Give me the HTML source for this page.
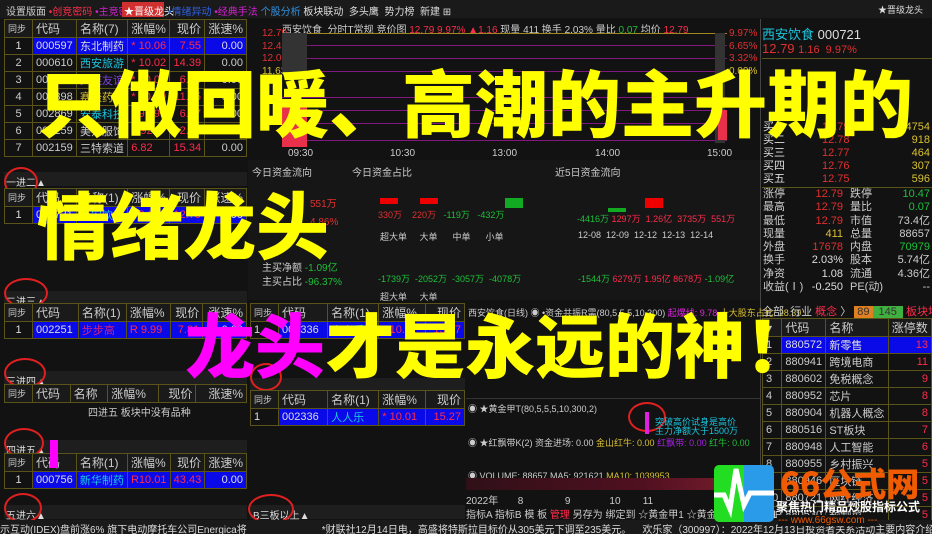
<!DOCTYPE html>
<html><head><meta charset="utf-8"><style>
*{margin:0;padding:0;box-sizing:border-box}
body{width:932px;height:534px;background:#121212;position:relative;overflow:hidden;font-family:"Liberation Sans","Noto Sans CJK SC",sans-serif;font-size:11px;color:#ccc}
.a{position:absolute;white-space:nowrap}
.bar{position:absolute;background:#1e1e1e}
.tbl{position:absolute;border-collapse:collapse;font-size:11px}
.tbl td{border:1px solid #5a5418;height:16px;padding:0 3px;white-space:nowrap}
.hd td{background:#1a1a1a;color:#ccc;font-size:12px}
.sel td{background:#0a0ae8}
.r{color:#ff2b4b}.g{color:#1fbf3a}.c{color:#19c6e0}.y{color:#d8c030}.w{color:#ddd}
.big{position:absolute;font-family:"Noto Sans CJK SC","WenQuanYi Zen Hei",sans-serif;font-weight:900;color:#ffff00;white-space:nowrap;line-height:1}
.circ{position:absolute;border:2px solid #e02020;border-radius:50%}
.sec{position:absolute;left:2px;font-size:10px;color:#ddd}
</style></head><body>
<div class="bar" style="left:0;top:0;width:932px;height:18px;background:#1a1a1a"></div>
<div class="a" style="left:6px;top:3px;font-size:10px;color:#ccc">设置版面 <span class="r">•创竞密码</span> <span style="color:#d020d0">•主竞密码</span></div>
<div class="a" style="left:122px;top:2px;width:42px;height:15px;background:#d03030;color:#fff;font-size:10px;padding:1px 2px">★晋级龙头</div>
<div class="a" style="left:168px;top:3px;font-size:10px;color:#3060e0">•情绪异动 <span style="color:#d020d0">•经典手法</span> <span style="color:#3090e0">个股分析</span> <span class="w">板块联动 &nbsp;多头鹰 &nbsp;势力榜 &nbsp;新建 ⊞</span></div>
<div class="a" style="left:878px;top:3px;font-size:9px;color:#ddd">★晋级龙头</div>
<table class="tbl" style="left:4px;top:19px;width:243px">
<tr class="hd"><td style="width:28px;font-size:9px">同步</td><td>代码</td><td>名称(7)</td><td>涨幅%</td><td style="text-align:right">现价</td><td style="text-align:right">涨速%</td></tr>
<tr class="sel"><td class="w" style="background:#121212;text-align:center">1</td><td class="w">000597</td><td class="w">东北制药</td><td class="r">* 10.06</td><td class="r" style="text-align:right">7.55</td><td class="w" style="text-align:right">0.00</td></tr>
<tr><td style="text-align:center">2</td><td>000610</td><td class="c">西安旅游</td><td class="r">* 10.02</td><td class="r" style="text-align:right">14.39</td><td style="text-align:right">0.00</td></tr>
<tr><td style="text-align:center">3</td><td>000679</td><td style="color:#8040e0">大连友谊</td><td class="r">* 10.00</td><td class="r" style="text-align:right">6.93</td><td style="text-align:right">0.00</td></tr>
<tr><td style="text-align:center">4</td><td>002398</td><td class="y">赛隆药业</td><td class="r">* 10.00</td><td class="r" style="text-align:right">11.75</td><td style="text-align:right">0.00</td></tr>
<tr><td style="text-align:center">5</td><td>002869</td><td class="c">安泰科技</td><td class="r">* 9.99</td><td class="r" style="text-align:right">6.57</td><td style="text-align:right">0.00</td></tr>
<tr><td style="text-align:center">6</td><td>002259</td><td>美邦服饰</td><td class="r">9.92</td><td class="r" style="text-align:right">2.46</td><td style="text-align:right">0.00</td></tr>
<tr><td style="text-align:center">7</td><td>002159</td><td>三特索道</td><td class="r">6.82</td><td class="r" style="text-align:right">15.34</td><td style="text-align:right">0.00</td></tr>
</table>
<div class="bar" style="left:4px;top:172px;width:243px;height:14px"></div><div class="sec" style="top:174px;left:6px">一进二▲</div>
<div class="circ" style="left:4px;top:167px;width:34px;height:30px"></div>
<table class="tbl" style="left:4px;top:188px;width:243px">
<tr class="hd"><td style="width:28px;font-size:9px">同步</td><td>代码</td><td>名称(1)</td><td>涨幅%</td><td style="text-align:right">现价</td><td style="text-align:right">涨速%</td></tr>
<tr class="sel"><td class="w" style="background:#121212;text-align:center">1</td><td class="w">000721</td><td class="c">西安饮食</td><td class="r">* 9.97</td><td class="r" style="text-align:right">12.79</td><td class="w" style="text-align:right">0.00</td></tr>
</table>
<div class="bar" style="left:4px;top:291px;width:243px;height:14px"></div><div class="sec" style="top:293px;left:6px">二进三▲</div>
<div class="circ" style="left:4px;top:278px;width:44px;height:30px"></div>
<table class="tbl" style="left:4px;top:303px;width:243px">
<tr class="hd"><td style="width:28px;font-size:9px">同步</td><td>代码</td><td>名称(1)</td><td>涨幅%</td><td style="text-align:right">现价</td><td style="text-align:right">涨速%</td></tr>
<tr class="sel"><td class="w" style="background:#121212;text-align:center">1</td><td class="w">002251</td><td style="color:#d02080">步步高</td><td class="r">R 9.99</td><td class="r" style="text-align:right">7.81</td><td class="w" style="text-align:right">0.00</td></tr>
</table>
<div class="bar" style="left:4px;top:371px;width:243px;height:14px"></div><div class="sec" style="top:373px;left:6px">三进四▲</div>
<div class="circ" style="left:4px;top:358px;width:42px;height:30px"></div>
<table class="tbl" style="left:4px;top:384px;width:243px">
<tr class="hd"><td style="width:28px;font-size:9px">同步</td><td>代码</td><td>名称</td><td>涨幅%</td><td style="text-align:right">现价</td><td style="text-align:right">涨速%</td></tr>
</table>
<div class="a" style="left:88px;top:404px;font-size:10px">四进五 板块中没有品种</div>
<div class="bar" style="left:4px;top:440px;width:243px;height:14px"></div><div class="sec" style="top:442px;left:6px">四进五▲</div>
<div class="circ" style="left:4px;top:428px;width:40px;height:30px"></div>
<table class="tbl" style="left:4px;top:453px;width:243px">
<tr class="hd"><td style="width:28px;font-size:9px">同步</td><td>代码</td><td>名称(1)</td><td>涨幅%</td><td style="text-align:right">现价</td><td style="text-align:right">涨速%</td></tr>
<tr class="sel"><td class="w" style="background:#121212;text-align:center">1</td><td class="w">000756</td><td class="c">新华制药</td><td class="r">R10.01</td><td class="r" style="text-align:right">43.43</td><td class="w" style="text-align:right">0.00</td></tr>
</table>
<div class="a" style="left:50px;top:440px;width:8px;height:28px;background:#ff00ff"></div>
<div class="bar" style="left:4px;top:505px;width:243px;height:14px"></div><div class="sec" style="top:507px;left:6px">五进六▲</div>
<div class="circ" style="left:4px;top:493px;width:38px;height:30px"></div>
<div class="a" style="left:282px;top:21px;font-size:10px">西安饮食 &nbsp;分时T常规 竞价图 <span class="r">12.79 9.97% ▲1.16</span> 现量 411 换手 2.03% 量比 <span class="g">0.07</span> 均价 <span class="r">12.79</span></div>
<div class="a" style="left:282px;top:33px;width:445px;height:1px;background:#a08820"></div>
<div class="a" style="left:282px;top:45px;width:445px;height:1px;background:#801880"></div>
<div class="a" style="left:282px;top:58px;width:445px;height:1px;background:#801880"></div>
<div class="a" style="left:282px;top:71px;width:445px;height:1px;background:#801880"></div>
<div class="a" style="left:282px;top:97px;width:445px;height:1px;background:#801880"></div>
<div class="a" style="left:282px;top:110px;width:445px;height:1px;background:#801880"></div>
<div class="a" style="left:282px;top:123px;width:445px;height:1px;background:#801880"></div>
<div class="a" style="left:282px;top:140px;width:445px;height:1px;background:#801880"></div>
<div class="a" style="left:262px;top:28px;font-size:10px;color:#e03030;line-height:12.5px">12.79<br>12.40<br>12.02<br><span class="y">11.63</span></div>
<div class="a" style="left:282px;top:33px;width:25px;height:40px;background:#333"></div>
<div class="a" style="left:282px;top:100px;width:25px;height:47px;background:#e8304a"></div>
<div class="a" style="left:715px;top:33px;width:10px;height:110px;background:#333"></div>
<div class="a" style="left:718px;top:110px;width:9px;height:30px;background:#e8304a"></div>
<div class="a" style="left:729px;top:28px;font-size:10px;color:#e03030;line-height:12.5px">9.97%<br>6.65%<br>3.32%<br><span class="y">0.00%</span></div>
<div class="a" style="left:760px;top:19px;width:1px;height:500px;background:#444"></div>
<div class="a" style="left:288px;top:148px;font-size:10px">09:30</div><div class="a" style="left:390px;top:148px;font-size:10px">10:30</div>
<div class="a" style="left:492px;top:148px;font-size:10px">13:00</div><div class="a" style="left:595px;top:148px;font-size:10px">14:00</div><div class="a" style="left:707px;top:148px;font-size:10px">15:00</div>
<div class="a" style="left:248px;top:160px;width:512px;height:140px;background:#161616"></div>
<div class="a" style="left:252px;top:164px;font-size:10px">今日资金流向</div>
<div class="a" style="left:352px;top:164px;font-size:10px">今日资金占比</div>
<div class="a" style="left:555px;top:164px;font-size:10px">近5日资金流向</div>
<div class="a" style="left:310px;top:196px;font-size:10px;color:#e03030;line-height:18px">551万<br>4.86%</div>
<div class="a" style="left:262px;top:262px;font-size:10px;line-height:14px">主买净额 <span class="g">-1.09亿</span><br>主买占比 <span class="g">-96.37%</span></div>
<div class="a" style="left:380px;top:198px;width:18px;height:6px;background:#e00"></div>
<div class="a" style="left:420px;top:198px;width:18px;height:6px;background:#e00"></div>
<div class="a" style="left:505px;top:198px;width:18px;height:10px;background:#1a2"></div>
<div class="a" style="left:645px;top:198px;width:18px;height:10px;background:#e00"></div>
<div class="a" style="left:608px;top:208px;width:18px;height:4px;background:#1a2"></div>
<div class="a" style="left:378px;top:208px;font-size:9px;color:#e03030">330万 &nbsp;&nbsp;&nbsp;220万 &nbsp;&nbsp;<span class="g">-119万 &nbsp;&nbsp;-432万</span></div>
<div class="a" style="left:577px;top:212px;font-size:9px"><span class="g">-4416万</span> <span class="r">1297万 &nbsp;1.26亿 &nbsp;3735万 &nbsp;551万</span></div>
<div class="a" style="left:380px;top:230px;font-size:9px">超大单 &nbsp;&nbsp;&nbsp;&nbsp;大单 &nbsp;&nbsp;&nbsp;&nbsp;&nbsp;中单 &nbsp;&nbsp;&nbsp;&nbsp;&nbsp;小单</div>
<div class="a" style="left:578px;top:230px;font-size:9px">12-08 &nbsp;12-09 &nbsp;12-12 &nbsp;12-13 &nbsp;12-14</div>
<div class="a" style="left:378px;top:272px;font-size:9px;color:#1fbf3a">-1739万 &nbsp;-2052万 &nbsp;-3057万 &nbsp;-4078万</div>
<div class="a" style="left:578px;top:272px;font-size:9px"><span class="g">-1544万</span> <span class="r">6279万 1.95亿 8678万</span> <span class="g">-1.09亿</span></div>
<div class="a" style="left:380px;top:290px;font-size:9px">超大单 &nbsp;&nbsp;&nbsp;&nbsp;大单</div>
<table class="tbl" style="left:250px;top:303px;width:215px">
<tr class="hd"><td style="font-size:9px">同步</td><td>代码</td><td>名称(1)</td><td>涨幅%</td><td style="text-align:right">现价</td></tr>
<tr class="sel"><td class="w" style="background:#121212">1</td><td class="w">002336</td><td class="c">人人乐</td><td class="r">* 10.01</td><td class="r" style="text-align:right">15.27</td></tr>
</table>
<div class="bar" style="left:250px;top:378px;width:215px;height:12px"></div>
<div class="circ" style="left:250px;top:363px;width:32px;height:28px"></div>
<table class="tbl" style="left:250px;top:390px;width:215px">
<tr class="hd"><td style="font-size:9px">同步</td><td>代码</td><td>名称(1)</td><td>涨幅%</td><td style="text-align:right">现价</td></tr>
<tr class="sel"><td class="w" style="background:#121212">1</td><td class="w">002336</td><td class="c">人人乐</td><td class="r">* 10.01</td><td class="r" style="text-align:right">15.27</td></tr>
</table>
<div class="bar" style="left:250px;top:505px;width:215px;height:14px"></div><div class="a" style="left:253px;top:507px;font-size:10px;color:#ddd">B三板以上▲</div>
<div class="circ" style="left:248px;top:494px;width:46px;height:30px"></div>
<div class="a" style="left:468px;top:306px;font-size:9px">西安饮食(日线) ◉ •资金共振R需(80,5,5,5,10,300) <span style="color:#e020e0">起爆线: 9.78</span> <span class="y">十大股东占比: 28.39</span></div>
<div class="a" style="left:466px;top:398px;width:294px;height:1px;background:#333"></div>
<div class="a" style="left:468px;top:402px;font-size:9px">◉ ★黄金甲T(80,5,5,5,10,300,2)</div>
<div class="circ" style="left:628px;top:402px;width:38px;height:30px"></div>
<div class="a" style="left:645px;top:412px;width:4px;height:22px;background:#e020e0"></div>
<div class="a" style="left:655px;top:418px;font-size:9px;color:#19c6e0;line-height:9px">突破高价试身是高价<br>主力净额大于1500万</div>
<div class="a" style="left:468px;top:436px;font-size:9px">◉ ★红飘带K(2) 资金进场: 0.00 <span class="y">金山红牛: 0.00</span> <span style="color:#a020e0">红飘带: 0.00</span> <span class="g">红牛: 0.00</span></div>
<div class="a" style="left:468px;top:469px;font-size:9px">◉ VOLUME: 88657 MA5: 921621 <span class="y">MA10: 1039953</span></div>
<div class="a" style="left:466px;top:478px;width:294px;height:12px;background:linear-gradient(90deg,#301018,#501020 60%,#802030)"></div>
<div class="a" style="left:466px;top:492px;font-size:10px">2022年 &nbsp;&nbsp;&nbsp;&nbsp;&nbsp;&nbsp;8 &nbsp;&nbsp;&nbsp;&nbsp;&nbsp;&nbsp;&nbsp;&nbsp;&nbsp;&nbsp;&nbsp;&nbsp;&nbsp;&nbsp;9 &nbsp;&nbsp;&nbsp;&nbsp;&nbsp;&nbsp;&nbsp;&nbsp;&nbsp;&nbsp;&nbsp;&nbsp;&nbsp;10 &nbsp;&nbsp;&nbsp;&nbsp;&nbsp;&nbsp;&nbsp;11</div>
<div class="a" style="left:466px;top:506px;font-size:10px">指标A 指标B 模 板 <span class="r">管理</span> 另存为 绑定到 ☆黄金甲1 ☆黄金甲5 ▲穿山甲R</div>
<div class="a" style="left:762px;top:24px;font-size:13px"><span class="c">西安饮食</span> <span class="w">000721</span></div>
<div class="a" style="left:762px;top:41px;font-size:13px;color:#e03030">12.79 <span style="font-size:11px">1.16 &nbsp;9.97%</span></div>
<div class="a" style="left:762px;top:58px;width:170px;height:1px;background:#5a5418"></div>
<div class="a" style="left:763px;top:121px;font-size:11px;line-height:13px;color:#ddd">买一<br>买二<br>买三<br>买四<br>买五</div>
<div class="a" style="left:822px;top:121px;font-size:11px;line-height:13px;color:#e03030">12.79<br>12.78<br>12.77<br>12.76<br>12.75</div>
<div class="a" style="left:890px;top:121px;font-size:11px;line-height:13px;color:#d8c030;text-align:right;width:40px">94754<br>918<br>464<br>307<br>596</div>
<div class="a" style="left:762px;top:187px;width:170px;height:1px;background:#5a5418"></div>
<div class="a" style="left:763px;top:188px;font-size:11px;line-height:13.3px">涨停<br>最高<br>最低<br>现量<br>外盘<br>换手<br>净资<br>收益(Ⅰ)</div>
<div class="a" style="left:805px;top:188px;width:38px;text-align:right;font-size:11px;line-height:13.3px;color:#e03030">12.79<br>12.79<br>12.79<br><span class="y">411</span><br>17678<br><span class="w">2.03%</span><br><span class="w">1.08</span><br><span class="w">-0.250</span></div>
<div class="a" style="left:850px;top:188px;font-size:11px;line-height:13.3px">跌停<br>量比<br>市值<br>总量<br>内盘<br>股本<br>流通<br>PE(动)</div>
<div class="a" style="left:888px;top:188px;width:42px;text-align:right;font-size:11px;line-height:13.3px">
<span class="g">10.47</span><br><span class="g">0.07</span><br>73.4亿<br>88657<br><span class="g">70979</span><br>5.74亿<br>4.36亿<br>--</div>
<div class="a" style="left:762px;top:303px;font-size:11px">全部 &nbsp;行业 <span class="r">概念</span> 〉 <span style="background:#e08020;color:#333;padding:0 3px">89</span><span style="background:#40b040;color:#333;padding:0 6px">145</span> <span class="r">板块地图</span></div>
<table class="tbl" style="left:762px;top:318px;width:170px">
<tr class="hd"><td>▾</td><td>代码</td><td>名称</td><td>涨停数</td></tr>
<tr class="sel"><td class="w" style="background:#121212">1</td><td class="w">880572</td><td class="w">新零售</td><td class="r" style="text-align:right">13</td></tr>
<tr><td>2</td><td>880941</td><td>跨境电商</td><td class="r" style="text-align:right">11</td></tr>
<tr><td>3</td><td>880602</td><td>免税概念</td><td class="r" style="text-align:right">9</td></tr>
<tr><td>4</td><td>880952</td><td>芯片</td><td class="r" style="text-align:right">8</td></tr>
<tr><td>5</td><td>880904</td><td>机器人概念</td><td class="r" style="text-align:right">8</td></tr>
<tr><td>6</td><td>880516</td><td>ST板块</td><td class="r" style="text-align:right">7</td></tr>
<tr><td>7</td><td>880948</td><td>人工智能</td><td class="r" style="text-align:right">6</td></tr>
<tr><td>8</td><td>880955</td><td>乡村振兴</td><td class="r" style="text-align:right">5</td></tr>
<tr><td>9</td><td>880946</td><td>区块链</td><td class="r" style="text-align:right">5</td></tr>
<tr><td>10</td><td>880721</td><td>网红经济</td><td class="r" style="text-align:right">5</td></tr>
<tr><td>11</td><td>880530</td><td>预制菜</td><td class="r" style="text-align:right">5</td></tr>
</table>
<div class="a" style="left:0;top:520px;width:932px;height:14px;background:#1a1a1a;font-size:10px;padding-top:1px;color:#ddd;overflow:hidden">示互动(IDEX)盘前涨6% 旗下电动摩托车公司Energica将 &nbsp;&nbsp;&nbsp;&nbsp;&nbsp;&nbsp;&nbsp;&nbsp;&nbsp;&nbsp;&nbsp;&nbsp;&nbsp;&nbsp;&nbsp;&nbsp;&nbsp;&nbsp;&nbsp;&nbsp;&nbsp;&nbsp;&nbsp;&nbsp;&nbsp;&nbsp;*财联社12月14日电，高盛将特斯拉目标价从305美元下调至235美元。 &nbsp;&nbsp;&nbsp;欢乐家（300997）：2022年12月13日投资者关系活动主要内容介绍</div>
<div class="a" style="left:714px;top:465px;width:60px;height:57px;border-radius:5px;overflow:hidden;background:linear-gradient(90deg,#22dd22 50%,#2a9be8 50%)">
<svg width="60" height="57" viewBox="0 0 60 57"><path d="M0 30 L10 30 L16 44 L22 4 L30 40 L36 28 L60 28" fill="none" stroke="#fff" stroke-width="5"/></svg></div>
<div class="a" style="left:780px;top:464px;font-size:33px;font-weight:900;color:#f05a00;font-family:'Noto Sans CJK SC',sans-serif;line-height:36px">66公式网</div>
<div class="a" style="left:776px;top:498px;font-size:12px;color:#fff;font-weight:bold">聚焦热门精品炒股指标公式</div>
<div class="a" style="left:778px;top:515px;font-size:10px;color:#f05a00;background:#121212">--- www.66gsw.com ---</div>
<div class="big" style="left:37px;top:64px;font-size:73px">只做回暖、高潮的主升期的</div>
<div class="big" style="left:37px;top:186px;font-size:73px">情绪龙头</div>
<div class="big" style="left:185px;top:308px;font-size:70px"><span style="color:#ff00ff">龙头</span>才是永远的神！</div>
</body></html>
